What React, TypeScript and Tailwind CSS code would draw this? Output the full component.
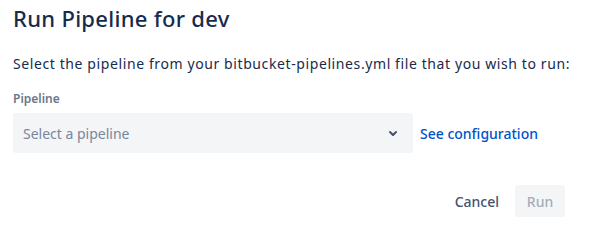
export default function App() {
  return (
    <div
      className="w-[589px] h-[226px] bg-white px-[13px] text-[#172B4D]"
      style={{ fontFamily: '"Noto Sans", sans-serif' }}
    >
      <h1 className="pt-[3px] text-[22px] leading-[30px] font-medium tracking-[0.3px]">Run Pipeline for dev</h1>
      <p className="mt-[21px] text-[14px] leading-[20px] tracking-[0.6px]">
        Select the pipeline from your bitbucket-pipelines.yml file that you wish to run:
      </p>
      <div className="mt-[17px] text-[12px] leading-[16px] font-semibold text-[#6B778C]">Pipeline</div>
      <div className="mt-[6px] flex items-center">
        <button className="flex h-[40px] w-[400px] items-center justify-between rounded-[3px] bg-[#F4F5F7] pl-[10px] pr-[14px] text-[14px] text-[#7A869A]">
          <span>Select a pipeline</span>
          <svg width="12" height="12" viewBox="0 0 24 24" className="text-[#42526E]">
            <path
              d="M8.292 10.293a1.009 1.009 0 0 0 0 1.419l2.939 2.965c.218.215.5.322.779.322s.556-.107.769-.322l2.93-2.955a1.01 1.01 0 0 0 0-1.419.987.987 0 0 0-1.406 0l-2.298 2.317-2.307-2.327a.99.99 0 0 0-1.406 0z"
              fill="currentColor"
              transform="translate(-12 -12) scale(2)"
            />
          </svg>
        </button>
        <a className="ml-[7px] text-[14px] font-medium text-[#0052CC]">See configuration</a>
      </div>
      <div className="mt-[32px] flex justify-end gap-[4px] pr-[11px]">
        <button className="h-[32px] rounded-[3px] px-[12px] text-[14px] font-medium text-[#42526E]">Cancel</button>
        <button className="h-[32px] w-[50px] rounded-[3px] bg-[#F4F5F7] text-[14px] font-medium text-[#A5ADBA]">
          Run
        </button>
      </div>
    </div>
  );
}
